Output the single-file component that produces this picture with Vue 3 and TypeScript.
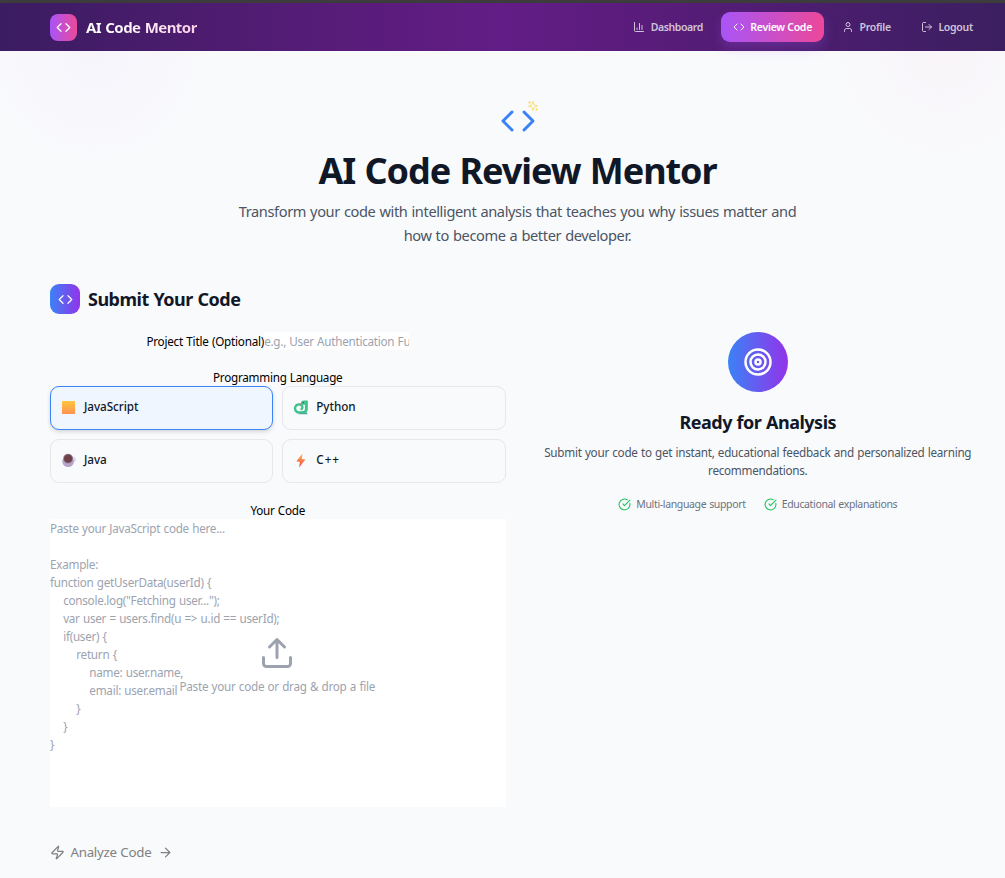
<script setup lang="ts">
import { computed, shallowRef } from 'vue'

type NavItem = {
  icon: 'chart' | 'code' | 'user' | 'logout'
  id: string
  label: string
}

type Language = {
  id: string
  name: string
}

const navItems: NavItem[] = [
  { id: 'dashboard', label: 'Dashboard', icon: 'chart' },
  { id: 'review', label: 'Review Code', icon: 'code' },
  { id: 'profile', label: 'Profile', icon: 'user' },
  { id: 'logout', label: 'Logout', icon: 'logout' },
]

const languages: Language[] = [
  { id: 'javascript', name: 'JavaScript' },
  { id: 'python', name: 'Python' },
  { id: 'java', name: 'Java' },
  { id: 'cpp', name: 'C++' },
]

const features = [
  { id: 'support', label: 'Multi-language support' },
  { id: 'explanations', label: 'Educational explanations' },
]

const iconPaths: Record<NavItem['icon'], string[]> = {
  chart: ['M3 3v16a2 2 0 0 0 2 2h16', 'M18 17V9', 'M13 17V5', 'M8 17v-3'],
  code: ['m16 18 6-6-6-6', 'm8 6-6 6 6 6'],
  user: ['M19 21v-2a4 4 0 0 0-4-4H9a4 4 0 0 0-4 4v2', 'M12 3a4 4 0 1 0 0 8 4 4 0 0 0 0-8'],
  logout: ['m16 17 5-5-5-5', 'M21 12H9', 'M9 21H5a2 2 0 0 1-2-2V5a2 2 0 0 1 2-2h4'],
}

const activePage = shallowRef('review')
const language = shallowRef('javascript')
const title = shallowRef('')
const code = shallowRef('')

const languageName = computed(
  () => languages.find((item) => item.id === language.value)?.name ?? '',
)

const codePlaceholder = computed(
  () => `Paste your ${languageName.value} code here...

Example:
function getUserData(userId) {
    console.log("Fetching user...");
    var user = users.find(u => u.id == userId);
    if(user) {
        return {
            name: user.name,
            email: user.email
        }
    }
}`,
)
</script>

<template>
  <div class="page">
    <header class="header">
      <div class="header__inner">
        <div class="brand">
          <span class="brand__logo">
            <svg class="icon" viewBox="0 0 24 24" width="15" height="15">
              <path v-for="d in iconPaths.code" :key="d" :d="d" />
            </svg>
          </span>
          <span class="brand__name">AI Code Mentor</span>
        </div>
        <nav class="nav">
          <button
            v-for="item in navItems"
            :key="item.id"
            type="button"
            class="nav__item"
            :class="{ 'nav__item--active': item.id === activePage }"
            @click="activePage = item.id"
          >
            <svg class="icon" viewBox="0 0 24 24" width="12" height="12">
              <path v-for="d in iconPaths[item.icon]" :key="d" :d="d" />
            </svg>
            <span :class="`nav__label nav__label--${item.id}`">{{ item.label }}</span>
          </button>
        </nav>
      </div>
    </header>

    <main class="main">
      <section class="hero">
        <div class="hero__mark">
          <svg class="icon hero__code" viewBox="0 0 24 24" width="36" height="36">
            <path v-for="d in iconPaths.code" :key="d" :d="d" />
          </svg>
          <svg class="icon hero__sparkle" viewBox="0 0 24 24" width="12" height="12">
            <path d="m12 3-1.9 5.8a2 2 0 0 1-1.3 1.3L3 12l5.8 1.9a2 2 0 0 1 1.3 1.3L12 21l1.9-5.8a2 2 0 0 1 1.3-1.3L21 12l-5.8-1.9a2 2 0 0 1-1.3-1.3Z" />
            <path d="M5 3v4M19 17v4M3 5h4M17 19h4" />
          </svg>
        </div>
        <h1 class="hero__title">AI Code Review Mentor</h1>
        <p class="hero__text">
          Transform your code with intelligent analysis that teaches you why issues matter and<br />
          how to become a better developer.
        </p>
      </section>

      <div class="columns">
        <section class="submit">
          <div class="submit__head">
            <span class="submit__badge">
              <svg class="icon" viewBox="0 0 24 24" width="15" height="15">
                <path v-for="d in iconPaths.code" :key="d" :d="d" />
              </svg>
            </span>
            <h2 class="submit__title">Submit Your Code</h2>
          </div>

          <div class="field field--title">
            <label for="title" class="field__label field__label--title">Project Title (Optional)</label>
            <input
              id="title"
              v-model="title"
              class="field__input"
              type="text"
              placeholder="e.g., User Authentication Function"
            />
          </div>

          <div class="field__label field__label--language">Programming Language</div>
          <div class="languages">
            <button
              v-for="item in languages"
              :key="item.id"
              type="button"
              class="language"
              :class="{ 'language--active': item.id === language }"
              @click="language = item.id"
            >
              <svg v-if="item.id === 'javascript'" viewBox="0 0 16 16" width="15" height="15">
                <defs>
                  <linearGradient id="square" x1="0" y1="0" x2="0" y2="1">
                    <stop offset="0" stop-color="#ffc53d" />
                    <stop offset="1" stop-color="#ff9153" />
                  </linearGradient>
                </defs>
                <rect x="1" y="1" width="14" height="14" rx="1" fill="url(#square)" />
              </svg>
              <svg v-else-if="item.id === 'python'" viewBox="0 0 16 16" width="15" height="15">
                <path d="M14 13.300H6.500a4.300 4.300 0 1 1 3-7.300c1.200 1.700.4 3.900-1.500 3.900" fill="none" stroke="#3fc28c" stroke-width="2.600" />
                <path d="M8.500 3.300C8.500 1.600 9.700.4 11.500.4h4.300V9c0 3.500-1.500 5.500-4 5.500H9.500l.5-2.700c1.900.2 2.700-.8 2.700-2.500V5H10c-.9 0-1.500-.8-1.500-1.700Z" fill="#3fc28c" />
                <path d="M5.500 15.200h10.300l-1.300-1.700H8Z" fill="#4ca995" />
                <circle cx="11" cy="2.700" r=".7" fill="#5b3b68" />
                <path d="m9 4-1.600.5" stroke="#ef4668" />
              </svg>
              <svg v-else-if="item.id === 'java'" viewBox="0 0 16 16" width="15" height="15">
                <circle cx="12.800" cy="7" r="2.200" fill="none" stroke="#c4b1d8" />
                <ellipse cx="7.600" cy="9" rx="6.200" ry="6" fill="#b7a4ca" />
                <circle cx="7.600" cy="6" r="5.300" fill="#998aa5" />
                <circle cx="7.600" cy="6" r="4.500" fill="#6f4148" />
              </svg>
              <svg v-else viewBox="0 0 16 16" width="15" height="15">
                <defs>
                  <linearGradient id="bolt" x1="0" y1="0" x2="0" y2="1">
                    <stop offset="0" stop-color="#ffb13d" />
                    <stop offset="1" stop-color="#f54a58" />
                  </linearGradient>
                </defs>
                <path d="M10 .8 3.500 8.800l3.800.7-.8 6 6.700-8.600-3.900-.6Z" fill="url(#bolt)" />
              </svg>
              <span :class="`language__name language__name--${item.id}`">{{ item.name }}</span>
            </button>
          </div>

          <label for="code" class="field__label">Your Code</label>
          <div class="editor">
            <textarea
              id="code"
              v-model="code"
              class="editor__input"
              :placeholder="codePlaceholder"
              spellcheck="false"
            ></textarea>
            <div v-if="!code" class="editor__drop">
              <svg class="icon" viewBox="0 0 24 24" width="36" height="36">
                <path d="M12 3v12M17 8l-5-5-5 5M21 15v4a2 2 0 0 1-2 2H5a2 2 0 0 1-2-2v-4" />
              </svg>
              <span>Paste your code or drag &amp; drop a file</span>
            </div>
          </div>

          <button type="button" class="analyze" :disabled="!code">
            <svg class="icon" viewBox="0 0 24 24" width="15" height="15">
              <path d="M4 14a1 1 0 0 1-.78-1.630l9.900-10.200a.5.5 0 0 1 .86.460l-1.920 6.020A1 1 0 0 0 13 10h7a1 1 0 0 1 .78 1.630l-9.900 10.200a.5.5 0 0 1-.86-.460l1.920-6.020A1 1 0 0 0 11 14z" />
            </svg>
            <span>Analyze Code</span>
            <svg class="icon analyze__arrow" viewBox="0 0 24 24" width="15" height="15">
              <path d="M5 12h14M12 5l7 7-7 7" />
            </svg>
          </button>
        </section>

        <section class="ready">
          <div class="ready__badge">
            <svg class="icon" viewBox="0 0 24 24" width="30" height="30">
              <circle cx="12" cy="12" r="10" />
              <circle cx="12" cy="12" r="6" />
              <circle cx="12" cy="12" r="2" />
            </svg>
          </div>
          <h3 class="ready__title">Ready for Analysis</h3>
          <p class="ready__text">
            Submit your code to get instant, educational feedback and personalized learning<br />
            recommendations.
          </p>
          <ul class="features">
            <li v-for="feature in features" :key="feature.id" class="features__item">
              <svg class="icon" viewBox="0 0 24 24" width="13" height="13">
                <path d="M21.800 10A10 10 0 1 1 17 3.340" />
                <path d="m9 11 3 3L22 4" />
              </svg>
              <span>{{ feature.label }}</span>
            </li>
          </ul>
        </section>
      </div>
    </main>
  </div>
</template>

<style>
body {
  margin: 0;
  overflow: hidden;
}
</style>

<style scoped>
.page {
  height: 878px;
  overflow: hidden;
  box-sizing: border-box;
  border-top: 3px solid #3c3c3c;
  background:
    radial-gradient(circle at 95px 48px, rgba(168, 85, 247, 0.03), transparent 115px),
    radial-gradient(circle at 942px 48px, rgba(236, 72, 153, 0.03), transparent 115px),
    #f9fafc;
  color: #000;
  font-family: 'Noto Sans', 'Open Sans', sans-serif;
  font-size: 11.7px;
  line-height: 18px;
  letter-spacing: -0.26px;
  word-spacing: 0.5px;
}

button,
input,
textarea {
  padding: 0;
  border: 0;
  color: inherit;
  font: inherit;
  letter-spacing: inherit;
  word-spacing: inherit;
}

h1,
h2,
h3,
p,
ul {
  margin: 0;
  padding: 0;
}

span,
label,
h1,
h2,
h3 {
  white-space: nowrap;
}

.icon {
  flex: none;
  fill: none;
  stroke: currentColor;
  stroke-width: 2;
  stroke-linecap: round;
  stroke-linejoin: round;
}

.header {
  height: 48px;
  background: linear-gradient(90deg, #3b1c61, #581c79 34%, #621d86 50%, #581c79 66%, #3b1f60);
}

.header__inner {
  display: flex;
  align-items: center;
  justify-content: space-between;
  height: 48px;
  padding: 0 20px 0 50px;
}

.brand {
  display: flex;
  align-items: center;
  gap: 9px;
}

.brand__logo {
  display: grid;
  place-items: center;
  width: 27px;
  height: 27px;
  border-radius: 8px;
  background: linear-gradient(90deg, #a855f7, #ec4899);
  color: #fff;
}

.brand__name {
  background: linear-gradient(90deg, #fff 20%, #fbcfe8);
  background-clip: text;
  color: transparent;
  font-size: 15px;
  font-weight: 700;
  letter-spacing: -0.55px;
  word-spacing: 0.8px;
}

.nav {
  display: flex;
  gap: 6px;
}

.nav__item {
  display: flex;
  align-items: center;
  gap: 5.5px;
  height: 30px;
  padding: 0 12px;
  border-radius: 9px;
  background: transparent;
  color: #cfc4da;
  font-size: 10.5px;
  font-weight: 600;
  letter-spacing: -0.27px;
  word-spacing: 0;
}

.nav__item--active {
  background: linear-gradient(90deg, #a855f7, #ec4899);
  box-shadow: 0 6px 12px rgba(168, 85, 247, 0.25);
  color: #fff;
}

.nav__label--dashboard {
  letter-spacing: -0.43px;
}

.main {
  padding: 48px 20px 0 50px;
}

.hero {
  display: flex;
  flex-direction: column;
  align-items: center;
  text-align: center;
}

.hero__mark {
  position: relative;
  width: 36px;
  height: 36px;
  margin: 4px 0 1px;
}

.hero__code {
  display: block;
  color: #3b82f6;
}

.hero__sparkle {
  position: absolute;
  top: -3px;
  right: -3px;
  color: #fcdf72;
}

.hero__title {
  margin-top: 8px;
  color: #101828;
  font-size: 36px;
  font-weight: 700;
  line-height: 46px;
  letter-spacing: -1.05px;
  word-spacing: 1px;
}

.hero__text {
  margin-top: 5px;
  color: #4b5563;
  font-size: 14.6px;
  line-height: 24px;
  letter-spacing: -0.38px;
  word-spacing: 0.6px;
}

.columns {
  display: grid;
  grid-template-columns: 1fr 1fr;
  gap: 24px;
  margin-top: 37px;
}

.submit__head {
  display: flex;
  align-items: center;
  gap: 8px;
}

.submit__badge {
  display: grid;
  place-items: center;
  width: 30px;
  height: 30px;
  border-radius: 9px;
  background: linear-gradient(90deg, #3b82f6, #9333ea);
  color: #fff;
}

.submit__title {
  color: #101828;
  font-size: 18px;
  line-height: 24px;
  letter-spacing: -0.5px;
}

.field--title {
  display: flex;
  justify-content: center;
  height: 18px;
  margin-top: 18px;
}

.field__label {
  display: block;
  text-align: center;
}

.field__label--title {
  letter-spacing: -0.22px;
}

.field__label--language {
  margin-top: 18px;
}

.field__input {
  box-sizing: border-box;
  width: 145px;
  height: 18px;
  background: #fff;
  outline: none;
}

.field__input::placeholder,
.editor__input::placeholder {
  color: #9ca3af;
  opacity: 1;
}

.languages {
  display: grid;
  grid-template-columns: 1fr 1fr;
  gap: 9px;
  margin-bottom: 18px;
}

.language {
  display: flex;
  align-items: center;
  gap: 8px;
  box-sizing: border-box;
  height: 44px;
  padding: 0 10px 2px;
  border: 1px solid #e5e7eb;
  border-radius: 9px;
  background: transparent;
  color: #101828;
  font-weight: 500;
}

.language--active {
  border-color: #3b82f6;
  background: #eff6ff;
  box-shadow: 0 2px 4px rgba(0, 0, 0, 0.14);
}

.language__name {
  padding-bottom: 2px;
  letter-spacing: -0.05px;
}

.language__name--cpp {
  letter-spacing: 1px;
}

.editor {
  position: relative;
  height: 288px;
}

.editor__input {
  display: block;
  width: 100%;
  height: 100%;
  outline: none;
  resize: none;
  background: #fff;
}

.editor__drop {
  position: absolute;
  inset: 0 1px 0 0;
  display: flex;
  flex-direction: column;
  align-items: center;
  justify-content: center;
  gap: 6px;
  padding-top: 4px;
  color: #9ca3af;
  pointer-events: none;
}

.analyze {
  display: flex;
  align-items: center;
  gap: 5.5px;
  margin-top: 36px;
  background: transparent;
  color: #808183;
  font-size: 13.3px;
  letter-spacing: -0.28px;
}

.analyze__arrow {
  margin-left: 1px;
}

.ready {
  display: flex;
  flex-direction: column;
  align-items: center;
  padding: 48px 0 0 1px;
  text-align: center;
}

.ready__badge {
  display: grid;
  place-items: center;
  width: 60px;
  height: 60px;
  border-radius: 50%;
  background: linear-gradient(90deg, #3b82f6, #9333ea);
  color: #fff;
}

.ready__title {
  margin-top: 18px;
  color: #101828;
  font-size: 18px;
  line-height: 24px;
  letter-spacing: -0.5px;
}

.ready__text {
  margin-top: 9px;
  color: #4b5563;
  white-space: nowrap;
}

.features {
  display: flex;
  gap: 18px;
  margin-top: 16px;
  color: #6b7280;
  font-size: 10.5px;
  letter-spacing: -0.35px;
  list-style: none;
}

.features__item {
  display: flex;
  align-items: center;
  gap: 5px;
}

.features__item .icon {
  color: #22c55e;
}
</style>
